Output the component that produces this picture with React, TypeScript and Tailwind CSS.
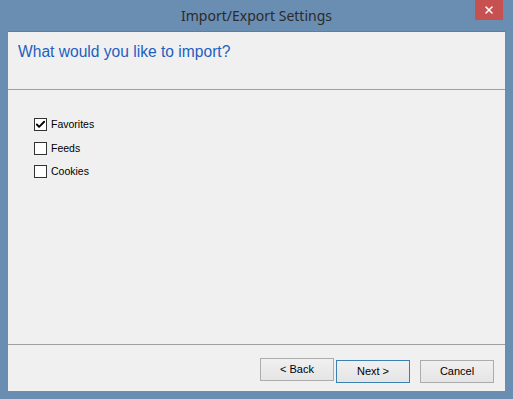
import { Check, X } from "lucide-react";

const items = [
  { label: "Favorites", checked: true },
  { label: "Feeds", checked: false },
  { label: "Cookies", checked: false },
];

function Checkbox({ label, checked }: { label: string; checked: boolean }) {
  return (
    <label className="flex h-[13px] items-center gap-[4px]">
      <span className="flex h-[13px] w-[13px] items-center justify-center border border-[#333333] bg-white">
        {checked && <Check className="h-[11px] w-[11px] text-black" strokeWidth={4} />}
      </span>
      <span className="text-[10.5px] leading-none text-black">{label}</span>
    </label>
  );
}

function DialogButton({ children, primary }: { children: string; primary?: boolean }) {
  return (
    <button
      className={`h-[23px] w-[74px] border bg-gradient-to-b from-[#f0f0f0] to-[#e5e5e5] text-[11px] text-black ${
        primary ? "border-[#3c7fb1]" : "border-[#acacac]"
      }`}
    >
      {children}
    </button>
  );
}

export default function App() {
  return (
    <div
      className="flex h-[399px] w-[513px] flex-col bg-[#6a8db2]"
      style={{ fontFamily: '"Liberation Sans", Arial, sans-serif' }}
    >
      <div className="relative flex h-[31px] items-center justify-center">
        <span className="text-[14px] text-[#2b2b2b]" style={{ fontFamily: '"Noto Sans", sans-serif' }}>
          Import/Export Settings
        </span>
        <button className="absolute right-[10px] top-0 flex h-[20px] w-[28px] items-center justify-center bg-[#c75050]">
          <X className="h-[12px] w-[12px] text-white" strokeWidth={3} />
        </button>
      </div>

      <div className="mx-[8px] mb-[8px] flex flex-1 flex-col border-t border-[#5a7ea5] bg-[#f0f0f0]">
        <div className="h-[58px] border-b border-[#a0a0a0] px-[10px] pt-[8px]">
          <h1 className="text-[15.6px] text-[#1e5fbf]">What would you like to import?</h1>
        </div>

        <div className="flex flex-1 flex-col gap-[10.5px] border-b border-[#a0a0a0] pl-[26px] pt-[28px]">
          {items.map((item) => (
            <Checkbox key={item.label} label={item.label} checked={item.checked} />
          ))}
        </div>

        <div className="flex h-[46px] items-start justify-end pr-[11px] pt-[13px]">
          <DialogButton>{"< Back"}</DialogButton>
          <div className="ml-[2px]">
            <DialogButton primary>{"Next >"}</DialogButton>
          </div>
          <div className="ml-[10px]">
            <DialogButton>Cancel</DialogButton>
          </div>
        </div>
      </div>
    </div>
  );
}
